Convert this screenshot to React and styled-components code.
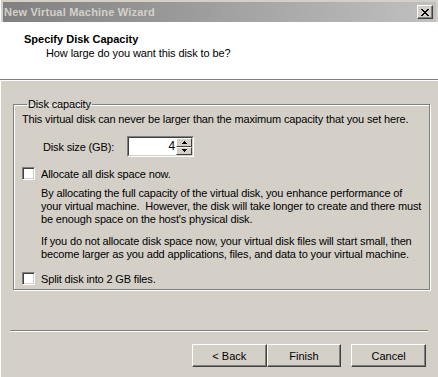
import React from "react";
import styled, { createGlobalStyle } from "styled-components";

const Global = createGlobalStyle`
  html, body { margin: 0; padding: 0; background: #d4d0c8; overflow: hidden; }
  body {
    font-family: "Liberation Sans", Arial, sans-serif;
    font-size: 11px;
    color: #000;
    white-space: nowrap;
  }
`;

const Window = styled.div`
  width: 438px;
  height: 377px;
  box-sizing: border-box;
  padding: 2px 2px 0 2px;
  background: #d4d0c8;
  border-left: 1px solid #ffffff;
  display: flex;
  flex-direction: column;
`;

const TitleBar = styled.div`
  height: 20px;
  display: flex;
  align-items: center;
  justify-content: space-between;
  padding: 0 3px 0 1px;
  background: linear-gradient(to right, #808080, #c0c0c0);
`;

const TitleText = styled.span`
  font-family: "Liberation Sans", Arial, sans-serif;
  font-weight: bold;
  font-size: 11px;
  color: #d4d0c8;
  letter-spacing: 0.2px;
`;

const CloseButton = styled.div`
  width: 16px;
  height: 14px;
  box-sizing: border-box;
  background: #d4d0c8;
  border: 1px solid;
  border-color: #ffffff #404040 #404040 #ffffff;
  box-shadow: inset -1px -1px 0 #808080;
  display: flex;
  align-items: center;
  justify-content: center;
`;

const Header = styled.div`
  height: 58px;
  background: #ffffff;
  box-sizing: border-box;
  padding: 11px 0 0 24px;
  border-bottom: 1px solid #808080;
  box-shadow: 0 1px 0 #ffffff;
  margin: 0 -2px 0 -3px;
`;

const HeaderTitle = styled.div`
  font-weight: bold;
  font-size: 11px;
  line-height: 13px;
`;

const HeaderSub = styled.div`
  font-size: 11px;
  line-height: 13px;
  padding-left: 22px;
  margin-top: 1px;
  letter-spacing: -0.1px;
`;

const Body = styled.div`
  flex: 1;
  display: flex;
  flex-direction: column;
  padding: 18px 10px 0 10px;
  letter-spacing: -0.15px;
`;

const Group = styled.fieldset`
  margin: 0;
  padding: 2px 8px 10px 8px;
  border: 1px solid #808080;
  box-shadow: 1px 1px 0 #ffffff, inset 1px 1px 0 #ffffff;
  height: 192px;
  box-sizing: border-box;
  width: 413px;
`;

const Legend = styled.legend`
  padding: 0 1px;
  margin-left: 5px;
  font-size: 11px;
  line-height: 13px;
`;

const Line = styled.div`
  font-size: 11px;
  line-height: 13px;
`;

const SizeRow = styled.div`
  display: flex;
  align-items: center;
  margin-top: 10px;
  padding-left: 21px;
`;

const SizeLabel = styled.span`
  width: 84px;
`;

const Spin = styled.div`
  width: 67px;
  height: 21px;
  box-sizing: border-box;
  border: 1px solid;
  border-color: #808080 #ffffff #ffffff #808080;
  display: flex;
`;

const SpinInner = styled.div`
  flex: 1;
  display: flex;
  background: #fff;
  border: 1px solid;
  border-color: #404040 #d4d0c8 #d4d0c8 #404040;
`;

const SpinValue = styled.div`
  flex: 1;
  text-align: right;
  padding-right: 1px;
  line-height: 17px;
  font-size: 12px;
`;

const SpinButtons = styled.div`
  width: 16px;
  display: flex;
  flex-direction: column;
`;

const SpinBtn = styled.div`
  flex: 1;
  background: #d4d0c8;
  box-sizing: border-box;
  border: 1px solid;
  border-color: #ffffff #404040 #404040 #ffffff;
  display: flex;
  align-items: center;
  justify-content: center;
`;

const CheckRow = styled.label`
  display: flex;
  align-items: center;
  margin-top: ${(p) => p.$top || 0}px;
  gap: 6px;
`;

const CheckBox = styled.span`
  width: 13px;
  height: 13px;
  box-sizing: border-box;
  background: #fff;
  border: 1px solid;
  border-color: #808080 #ffffff #ffffff #808080;
  box-shadow: inset 1px 1px 0 #404040, inset -1px -1px 0 #d4d0c8;
`;

const Para = styled.div`
  padding-left: 19px;
  margin-top: ${(p) => p.$top || 0}px;
  line-height: 13px;
`;

const Separator = styled.div`
  margin: 40px -2px 0 -3px;
  border-top: 1px solid #808080;
  border-bottom: 1px solid #ffffff;
`;

const ButtonRow = styled.div`
  display: flex;
  padding: 12px 0 0 179px;
  letter-spacing: 0;
`;

const Button = styled.div`
  width: 75px;
  height: 23px;
  box-sizing: border-box;
  border: 1px solid;
  border-color: #ffffff #404040 #404040 #ffffff;
  box-shadow: inset -1px -1px 0 #808080;
  display: flex;
  align-items: center;
  justify-content: center;
  margin-left: ${(p) => p.$gap || 0}px;
  font-size: 11px;
`;

const Arrow = ({ up }) => (
  <svg width="5" height="3" viewBox="0 0 5 3">
    <path d={up ? "M2 0h1v1h1v1h1v1H0V2h1V1h1z" : "M0 0h5v1H4v1H3v1H2V2H1V1H0z"} fill="#000" />
  </svg>
);

export default function App() {
  return (
    <>
      <Global />
      <Window>
        <TitleBar>
          <TitleText>New Virtual Machine Wizard</TitleText>
          <CloseButton>
            <svg width="8" height="7" viewBox="0 0 8 7">
              <path d="M0 0h2v1h1v1h2V1h1V0h2v1H7v1H6v1H5v1h1v1h1v1h1v1H6V6H5V5H3v1H2v1H0V6h1V5h1V4h1V3H2V2H1V1H0z" fill="#000" />
            </svg>
          </CloseButton>
        </TitleBar>
        <Header>
          <HeaderTitle>Specify Disk Capacity</HeaderTitle>
          <HeaderSub>How large do you want this disk to be?</HeaderSub>
        </Header>
        <Body>
          <Group>
            <Legend>Disk capacity</Legend>
            <Line>This virtual disk can never be larger than the maximum capacity that you set here.</Line>
            <SizeRow>
              <SizeLabel>Disk size (GB):</SizeLabel>
              <Spin>
                <SpinInner>
                  <SpinValue>4</SpinValue>
                  <SpinButtons>
                    <SpinBtn><Arrow up /></SpinBtn>
                    <SpinBtn><Arrow /></SpinBtn>
                  </SpinButtons>
                </SpinInner>
              </Spin>
            </SizeRow>
            <CheckRow $top={10}>
              <CheckBox />
              <span>Allocate all disk space now.</span>
            </CheckRow>
            <Para $top={7}>
              By allocating the full capacity of the virtual disk, you enhance performance of<br />
              your virtual machine.&nbsp; However, the disk will take longer to create and there must<br />
              be enough space on the host's physical disk.
            </Para>
            <Para $top={9}>
              If you do not allocate disk space now, your virtual disk files will start small, then<br />
              become larger as you add applications, files, and data to your virtual machine.
            </Para>
            <CheckRow $top={11}>
              <CheckBox />
              <span>Split disk into 2 GB files.</span>
            </CheckRow>
          </Group>
          <Separator />
          <ButtonRow>
            <Button>&lt; Back</Button>
            <Button>Finish</Button>
            <Button $gap={10}>Cancel</Button>
          </ButtonRow>
        </Body>
      </Window>
    </>
  );
}
